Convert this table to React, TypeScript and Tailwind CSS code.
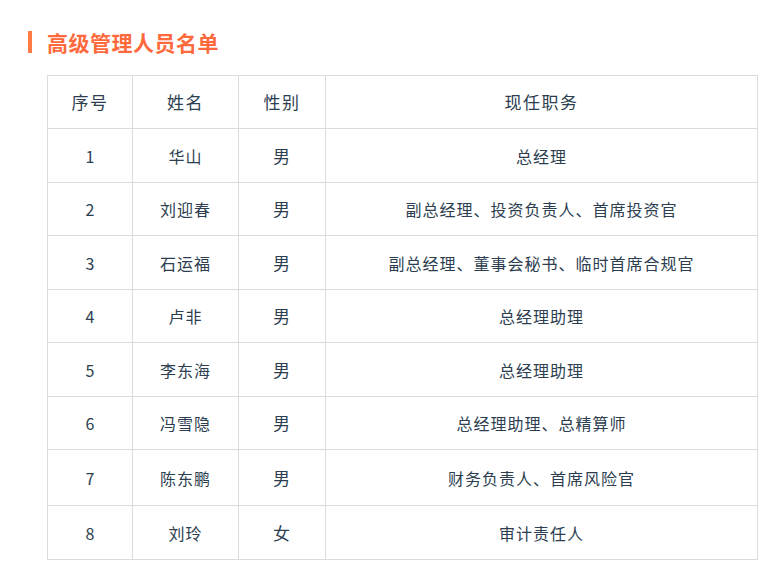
import React from "react";

const rows = [
  ["1", "华山", "男", "总经理"],
  ["2", "刘迎春", "男", "副总经理、投资负责人、首席投资官"],
  ["3", "石运福", "男", "副总经理、董事会秘书、临时首席合规官"],
  ["4", "卢非", "男", "总经理助理"],
  ["5", "李东海", "男", "总经理助理"],
  ["6", "冯雪隐", "男", "总经理助理、总精算师"],
  ["7", "陈东鹏", "男", "财务负责人、首席风险官"],
  ["8", "刘玲", "女", "审计责任人"],
];

const heights = [54, 53, 54, 53, 54, 53, 56, 54];

export default function App() {
  return (
    <div
      className="w-[783px] h-[570px] bg-white"
      style={{ fontFamily: '"Noto Sans CJK SC", "Noto Sans", sans-serif' }}
    >
      <div className="pt-[29px] pl-[28px] flex items-center h-[26px] box-content">
        <div className="w-[4px] h-[22px] bg-[#ff7a45]" />
        <div className="ml-[15px] text-[21px] leading-[26px] font-bold text-[#ff6a3d] tracking-[0.5px]">
          高级管理人员名单
        </div>
      </div>
      <div className="pl-[47px] pt-[20px]">
        <table className="border-collapse w-[710px] text-[#2c3e50] table-fixed">
          <colgroup>
            <col className="w-[85px]" />
            <col className="w-[106px]" />
            <col className="w-[87px]" />
            <col className="w-[432px]" />
          </colgroup>
          <thead>
            <tr className="h-[53px]">
              {["序号", "姓名", "性别", "现任职务"].map((h) => (
                <th
                  key={h}
                  className="border border-[#dcdcdc] font-normal text-[17px] tracking-[1.5px] text-center p-0"
                >
                  {h}
                </th>
              ))}
            </tr>
          </thead>
          <tbody>
            {rows.map((r, i) => (
              <tr key={i} style={{ height: heights[i] }}>
                {r.map((c, j) => (
                  <td
                    key={j}
                    className={`border border-[#dcdcdc] text-center p-0 ${
                      j === 0 ? "text-[16px]" : j === 2 ? "text-[17px] tracking-[1px]" : "text-[16px] tracking-[1px]"
                    }`}
                  >
                    {c}
                  </td>
                ))}
              </tr>
            ))}
          </tbody>
        </table>
      </div>
    </div>
  );
}
